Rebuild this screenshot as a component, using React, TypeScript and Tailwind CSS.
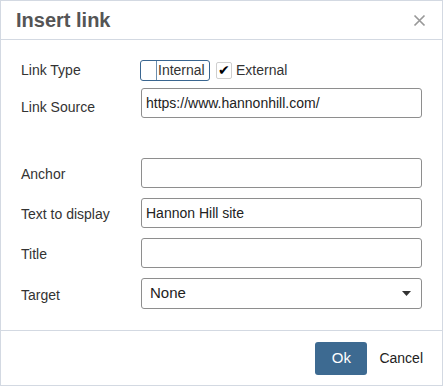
function Field({ label, value, labelPad = "pt-[3px]" }: { label: string; value?: string; labelPad?: string }) {
  return (
    <div className="flex h-[30px] items-center">
      <span className={`w-[120px] shrink-0 ${labelPad}`}>{label}</span>
      <div className="flex h-[30px] w-[282px] items-center rounded-[3px] border border-[#8e8e8e] px-[4px] text-[14px] text-[#222]">
        {value}
      </div>
    </div>
  );
}

export default function App() {
  return (
    <div
      className="h-[386px] w-[444px] bg-white text-[14px] text-[#333]"
      style={{ fontFamily: '"Liberation Sans", Arial, sans-serif' }}
    >
      <div className="flex h-full w-[443px] flex-col border border-[#d3d9e2]">
        <div className="flex h-[39px] shrink-0 items-center justify-between border-b border-[#d3d9e2] pl-[15px] pr-[16px]">
          <h1 className="text-[20px] font-bold text-[#555]">Insert link</h1>
          <svg width="13" height="13" viewBox="0 0 13 13" className="text-[#999]">
            <path d="M1.5 1.5 L11.5 11.5 M11.5 1.5 L1.5 11.5" stroke="currentColor" strokeWidth="1.7" />
          </svg>
        </div>

        <div className="flex flex-1 flex-col px-[20px] pt-[20px]">
          <div className="flex h-[20px] items-center">
            <span className="w-[119px] shrink-0">Link Type</span>
            <div className="flex h-[21px] w-[70px] items-stretch rounded-[3px] border-[1.5px] border-[#3a6690]">
              <div className="w-[16px] border-r border-[#6d8fae]" />
              <span className="pl-[1px] leading-[18px]">Internal</span>
            </div>
            <div className="ml-[6px] flex h-[17px] w-[16px] items-center justify-center rounded-[2px] border border-[#cfcfcf] text-[14px] leading-none text-black">
              ✔
            </div>
            <span className="ml-[4px]">External</span>
          </div>

          <div className="mt-[8px]">
            <Field label="Link Source" value="https://www.hannonhill.com/" labelPad="pt-[8px]" />
          </div>

          <div className="mt-[40px] flex flex-col gap-[10px]">
            <Field label="Anchor" />
            <Field label="Text to display" value="Hannon Hill site" />
            <Field label="Title" />
            <div className="flex h-[31px] items-center">
              <span className="w-[120px] shrink-0 pt-[3px]">Target</span>
              <div className="flex h-[31px] w-[282px] items-center justify-between rounded-[3px] border border-[#8e8e8e] pl-[8px] pr-[10px] text-[15px] text-[#222]">
                None
                <svg width="9" height="5" viewBox="0 0 9 5">
                  <path d="M0 0 L9 0 L4.5 5 Z" fill="#333" />
                </svg>
              </div>
            </div>
          </div>
        </div>

        <div className="flex h-[55px] shrink-0 items-center justify-end border-t border-[#d3d9e2] pr-[19px]">
          <button className="h-[33px] w-[52px] rounded-[3px] bg-[#3d6a91] text-[15px] text-white">
            Ok
          </button>
          <span className="ml-[12px] text-[14px] text-[#222]">Cancel</span>
        </div>
      </div>
    </div>
  );
}
